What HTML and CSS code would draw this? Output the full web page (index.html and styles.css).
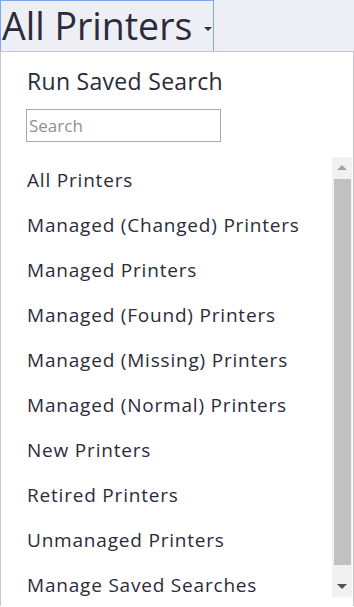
FILE: index.html
```html
<!DOCTYPE html>
<html lang='en'>
  <head>
    <meta charset='UTF-8'/>
    <title>Saved Searches</title>
    <link rel="stylesheet" href="styles.css">
  </head>
  <body>
    <div class='toolbar'>
      <button class='picker'>All Printers<span class='caret'></span></button>
    </div>
    <div class='menu'>
      <h2 class='menu-title'>Run Saved Search</h2>
      <input class='search' type='text' placeholder='Search'/>
      <div class='results'>
        <ul class='list'>
          <li>All Printers</li>
          <li>Managed (Changed) Printers</li>
          <li>Managed Printers</li>
          <li>Managed (Found) Printers</li>
          <li>Managed (Missing) Printers</li>
          <li>Managed (Normal) Printers</li>
          <li>New Printers</li>
          <li>Retired Printers</li>
          <li>Unmanaged Printers</li>
          <li>Manage Saved Searches</li>
        </ul>
        <div class='scrollbar'>
          <div class='arrow up'></div>
          <div class='track'><div class='thumb'></div></div>
          <div class='arrow down'></div>
        </div>
      </div>
    </div>
  </body>
</html>
```

FILE: styles.css
```css
body {
  margin: 0;
  background-color: #FFFFFF;
  font-family: "Open Sans", Lato, sans-serif;
  color: #2B2B3B;
}

.toolbar {
  height: 52px;
  background-color: #EEEFF4;
}

.picker {
  display: flex;
  align-items: center;
  height: 52px;
  width: 214px;
  margin: 0;
  padding: 0 0 0 1px;
  border: 1px solid #7DA7F2;
  background-color: #EEEFF4;
  font-family: inherit;
  font-size: 37.5px;
  line-height: 50px;
  color: #2B2B3B;
}

.caret {
  margin-left: auto;
  margin-right: 1px;
  margin-top: 6px;
  border-left: 4px solid transparent;
  border-right: 4px solid transparent;
  border-top: 4px solid #333333;
}

.menu {
  height: 555px;
  border: 1px solid #C8C8CC;
  border-bottom: none;
  margin-top: -1px;
  background-color: #FFFFFF;
  box-sizing: border-box;
  padding-top: 14px;
}

.menu-title {
  margin: 0 0 13px 26px;
  font-size: 23px;
  letter-spacing: 0.3px;
  line-height: 30px;
  font-weight: normal;
}

.search {
  display: block;
  margin-left: 25px;
  width: 195px;
  height: 33px;
  box-sizing: border-box;
  border: 1px solid #A9A9A9;
  padding: 0 2px;
  font-family: inherit;
  font-size: 17px;
}

.search::placeholder {
  color: #8A90A0;
}

.results {
  display: flex;
  margin-top: 15px;
  height: 440px;
}

.list {
  flex: 1;
  list-style: none;
  margin: 0;
  padding: 1px 0 0 26px;
  overflow: hidden;
}

.list li {
  height: 45px;
  line-height: 45px;
  font-size: 19px;
  letter-spacing: 0.8px;
  white-space: nowrap;
}

.scrollbar {
  display: flex;
  flex-direction: column;
  width: 20px;
  margin-right: 1px;
  background-color: #F1F1F1;
}

.arrow {
  height: 21px;
  display: flex;
  justify-content: center;
  align-items: center;
}

.arrow::after {
  content: '';
  border-left: 5px solid transparent;
  border-right: 5px solid transparent;
}

.up::after {
  border-bottom: 5px solid #A3A3A3;
}

.down::after {
  border-top: 5px solid #505050;
}

.track {
  flex: 1;
  padding: 1px 1px 11px 2px;
  display: flex;
}

.thumb {
  flex: 1;
  background-color: #C1C1C1;
}
```
